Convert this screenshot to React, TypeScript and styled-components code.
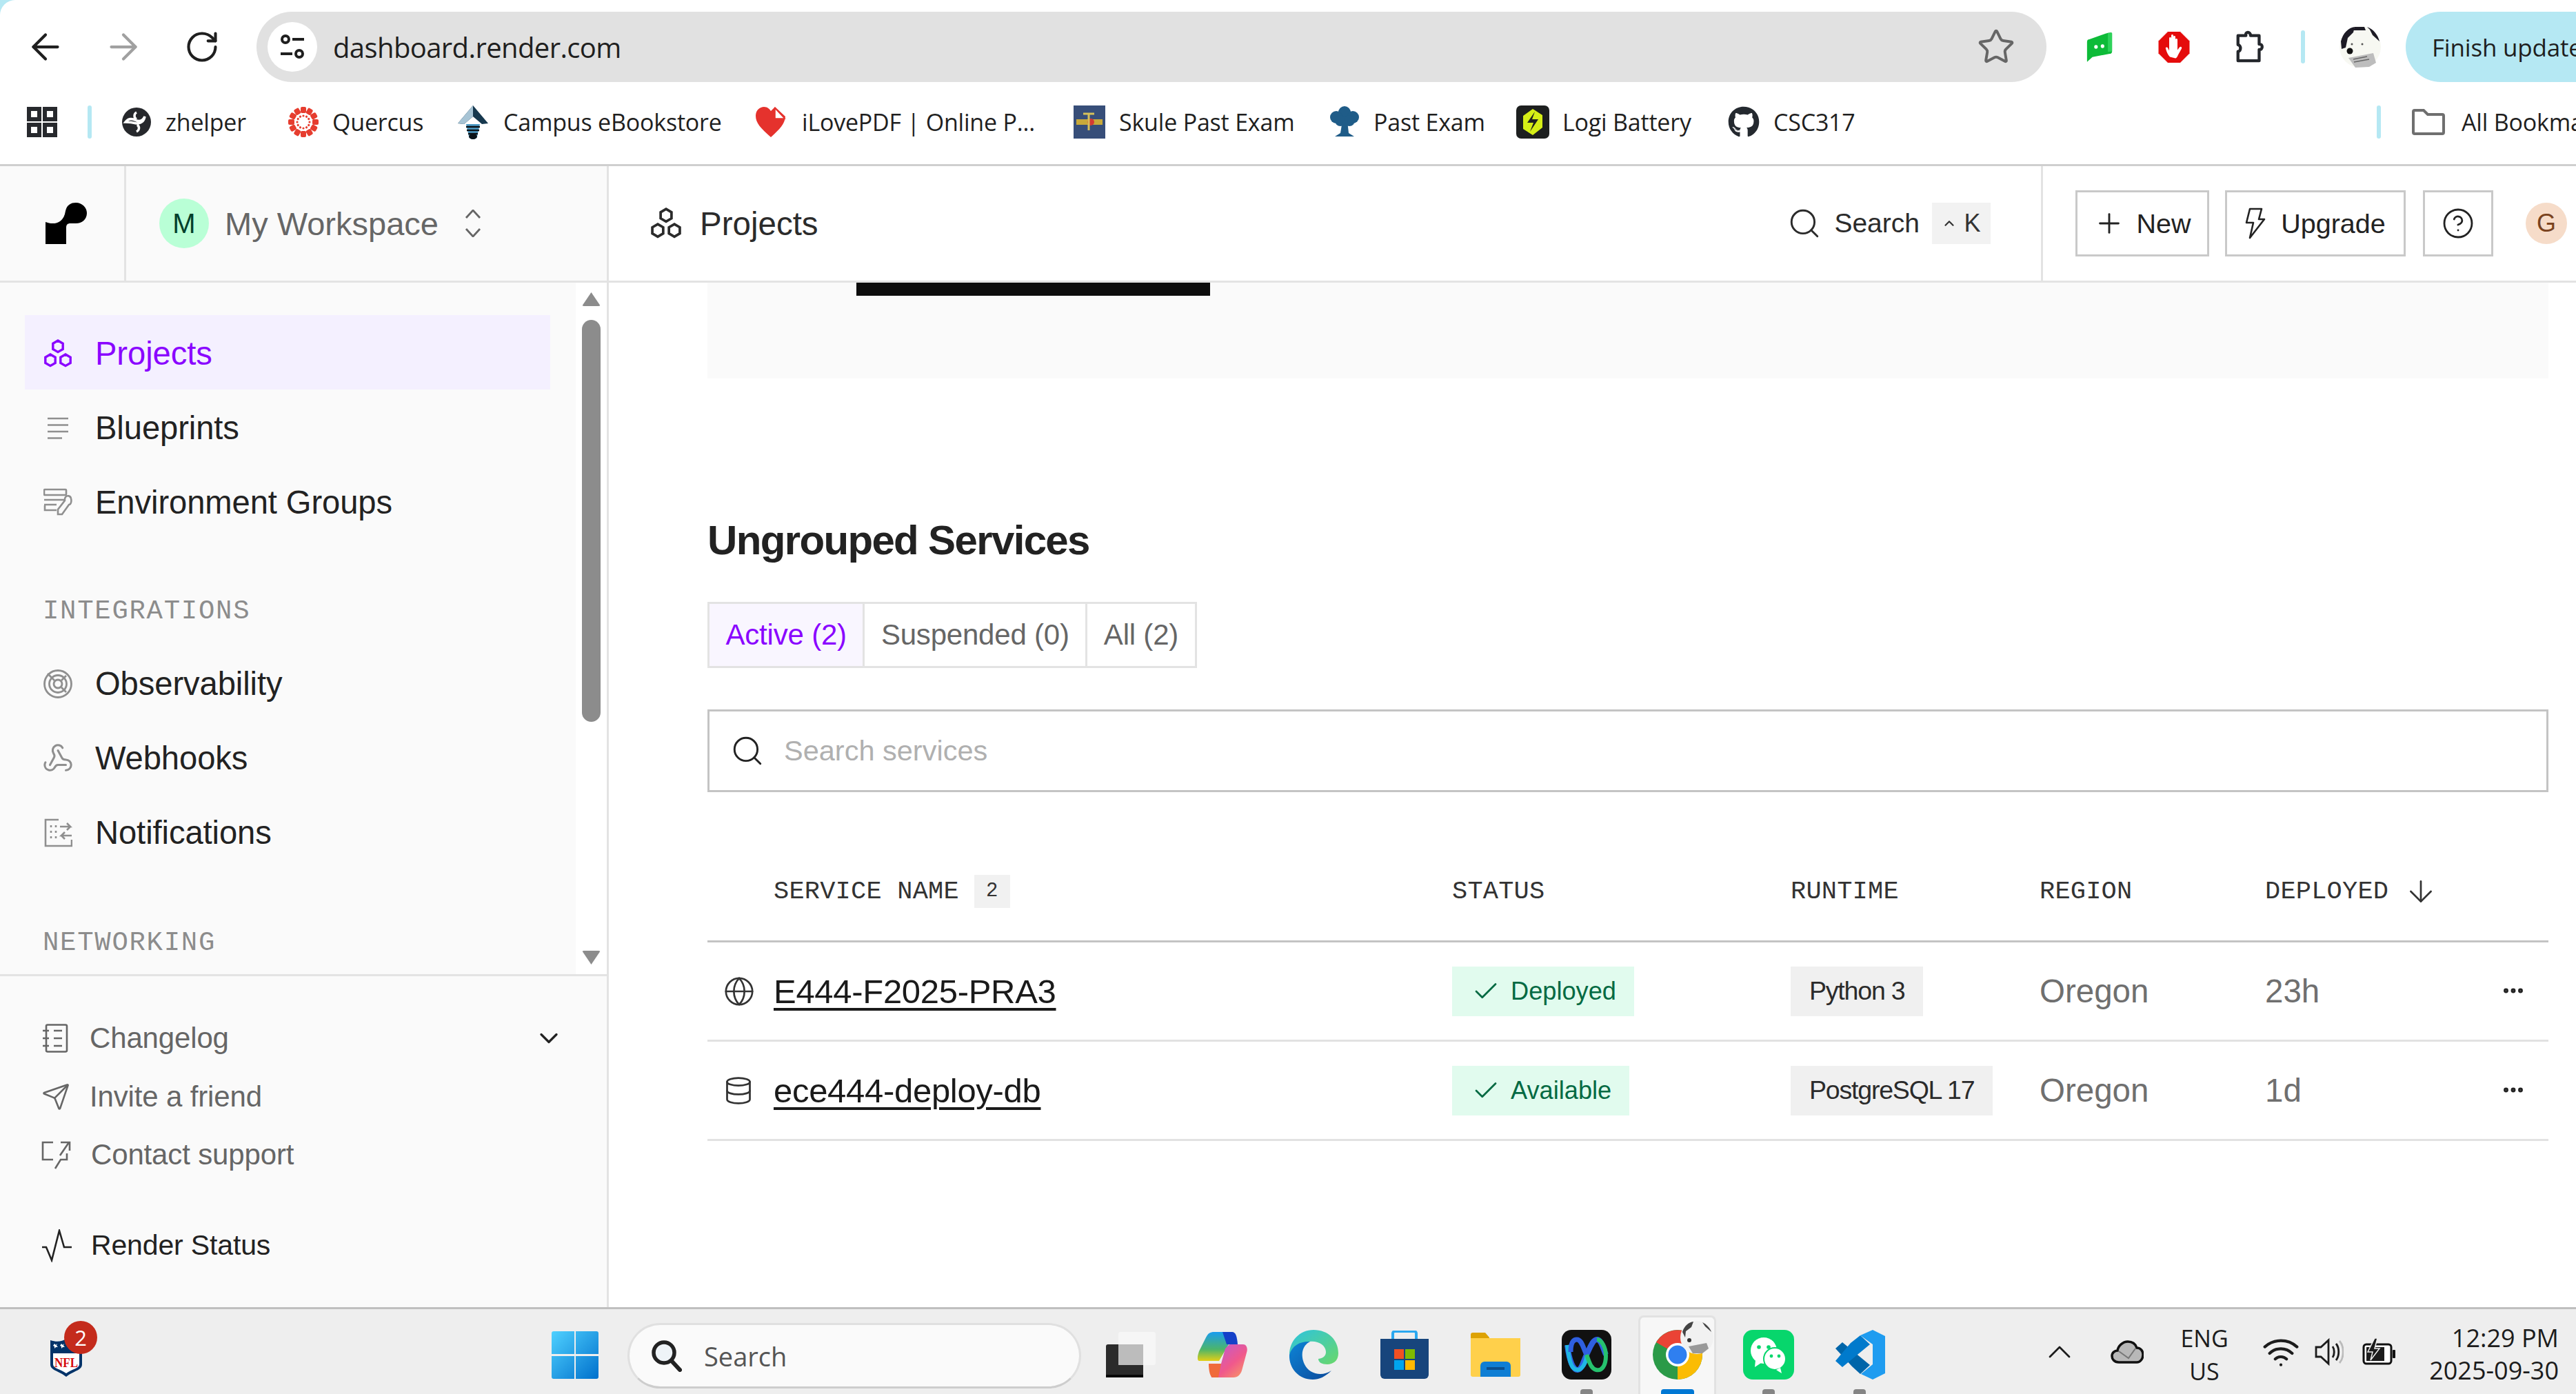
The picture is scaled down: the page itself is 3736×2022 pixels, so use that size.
import React from "react";
import styled, { createGlobalStyle } from "styled-components";
import {
  ArrowDown, ArrowLeft, ArrowRight, Check, ChevronDown, ChevronUp, CircleHelp, Database,
  Ellipsis, Globe, Plus, RotateCw, Search, Send, Star, Webhook, Wifi,
} from "lucide-react";
import { FaGithub } from "react-icons/fa";

const Global = createGlobalStyle`
  html, body { margin: 0; padding: 0; width: 3736px; height: 2022px; overflow: hidden; background: #fff; }
  * { box-sizing: border-box; }
  svg { display: block; flex: none; }
`;

const UI = `"Liberation Sans", Arial, sans-serif`;
const MONO = `"Liberation Mono", "DejaVu Sans Mono", monospace`;
const WIN = `"Open Sans", "Noto Sans", sans-serif`;

const Page = styled.div`
  width: 3736px; height: 2022px; display: flex; flex-direction: column; background: #b5e8f3;
`;
const Toolbar = styled.div`
  height: 120px; flex: none; display: flex; align-items: center; background: #fff;
  border-top-left-radius: 22px; padding-top: 16px; padding-bottom: 0;
  font-family: ${WIN}; color: #1f1f1f;
`;
const NavButton = styled.div<{ $w: number; $c?: string }>`
  width: ${(p) => p.$w}px; flex: none; display: flex; justify-content: center; color: ${(p) => p.$c ?? "#1f1f1f"};
`;
const Omnibox = styled.div`
  width: 2596px; height: 102px; flex: none; background: #e1e1e1; border-radius: 51px;
  display: flex; align-items: center; padding: 0 45px 0 16px; position: relative;
`;
const SiteChip = styled.div`
  width: 72px; height: 72px; border-radius: 50%; background: #fff; display: flex; align-items: center; justify-content: center;
`;
const UrlText = styled.div`
  margin-left: 23px; font-size: 40px; letter-spacing: -0.6px; flex: 1; color: #1f1f1f;
`;
const ExtSlot = styled.div<{ $w: number; $ml: number }>`
  width: ${(p) => p.$w}px; margin-left: ${(p) => p.$ml}px; flex: none; display: flex; justify-content: center; align-items: center;
`;
const BlueRule = styled.div<{ $h: number; $ml?: number }>`
  width: 6px; height: ${(p) => p.$h}px; background: #b5e8f3; border-radius: 3px; flex: none; margin-left: ${(p) => p.$ml ?? 0}px;
`;
const UpdatePill = styled.div`
  margin-left: 36px; flex: 1; height: 102px; background: #b5e8f3; border-radius: 51px 0 0 51px;
  display: flex; align-items: center; padding-left: 38px; font-size: 35px; letter-spacing: -0.2px; white-space: nowrap; overflow: hidden;
`;
const BookmarkBar = styled.div`
  height: 121px; flex: none; display: flex; align-items: center; background: #fff; border-bottom: 3px solid #cfcfcf;
  font-family: ${WIN}; font-size: 34px; letter-spacing: -0.2px; color: #1f1f1f; overflow: hidden; padding-left: 39px; padding-bottom: 4px;
`;
const Bookmark = styled.div<{ $w: number; $gap?: number }>`
  width: ${(p) => p.$w}px; flex: none; display: flex; align-items: center; gap: ${(p) => p.$gap ?? 22}px; white-space: nowrap;
`;
const AppArea = styled.div`
  flex: 1; min-height: 0; display: flex; background: #fff;
`;
const Sidebar = styled.aside`
  width: 883px; flex: none; display: flex; flex-direction: column; border-right: 3px solid #e3e3e3; font-family: ${UI};
`;
const SideHead = styled.div`
  height: 169px; flex: none; display: flex; align-items: stretch; background: #fafafa; border-bottom: 3px solid #e3e3e3;
`;
const LogoCell = styled.div`
  width: 183px; display: flex; align-items: center; padding-left: 66px; border-right: 3px solid #e3e3e3;
`;
const Workspace = styled.div`
  flex: 1; display: flex; align-items: center; padding-left: 48px; color: #666; font-size: 47px;
`;
const WsAvatar = styled.div`
  width: 72px; height: 72px; border-radius: 50%; background: #b9ffd6; color: #013f2b; display: flex; align-items: center;
  justify-content: center; font-size: 40px; margin-right: 23px;
`;
const WsChevrons = styled.div`
  margin-left: 38px; color: #666;
`;
const SideBody = styled.div`
  height: 1006px; flex: none; display: flex; border-bottom: 3px solid #e3e3e3; background: #fff;
`;
const NavScroll = styled.nav`
  width: 835px; flex: none; background: #fafafa; padding: 47px 0 0 36px; overflow: hidden;
`;
const NavItem = styled.div<{ $active?: boolean }>`
  width: 762px; height: 108px; flex: none; display: flex; align-items: center; padding: 3px 0 0 27px; gap: 33px; font-size: 47.2px; letter-spacing: -0.1px;
  background: ${(p) => (p.$active ? "#f4f0ff" : "transparent")}; color: ${(p) => (p.$active ? "#8a05ff" : "#222")};
`;
const NavIcon = styled.span<{ $active?: boolean }>`
  width: 42px; display: flex; justify-content: center; color: ${(p) => (p.$active ? "#8a05ff" : "#8f8f8f")};
`;
const SectionLabel = styled.div<{ $mt: number }>`
  margin-top: ${(p) => p.$mt}px; height: 108px; display: flex; align-items: center; padding: 10px 0 0 26px; font-family: ${MONO};
  font-size: 39px; letter-spacing: 1.7px; color: #8c8c8c;
`;
const Scrollbar = styled.div`
  flex: 1; display: flex; flex-direction: column; align-items: center; padding: 14px 0; background: #fff; gap: 20px;
`;
const ScrollArrow = styled.div<{ $down?: boolean }>`
  width: 27px; height: 20px; background: #8c8c8c; border-radius: 3px;
  clip-path: ${(p) => (p.$down ? "polygon(0 0,100% 0,50% 100%)" : "polygon(50% 0,100% 100%,0 100%)")};
`;
const ScrollThumb = styled.div`
  width: 27px; height: 583px; background: #8c8c8c; border-radius: 14px; margin-bottom: auto;
`;
const SideFoot = styled.div`
  flex: 1; background: #fafafa; padding: 48px 62px 0 60px; display: flex; flex-direction: column;
`;
const FootRow = styled.div<{ $dark?: boolean; $mt?: number }>`
  height: 84.5px; display: flex; align-items: center; gap: 28px; font-size: ${(p) => (p.$dark ? 41 : 42)}px; letter-spacing: -0.15px; color: ${(p) => (p.$dark ? "#222" : "#666")};
  margin-top: ${(p) => p.$mt ?? 0}px;
`;
const FootEnd = styled.div`
  margin-left: auto; color: #222;
`;
const Main = styled.main`
  flex: 1; min-width: 0; display: flex; flex-direction: column; font-family: ${UI};
`;
const MainHead = styled.header`
  height: 169px; flex: none; display: flex; align-items: stretch; border-bottom: 3px solid #e3e3e3; background: #fff;
`;
const Crumb = styled.div`
  flex: 1; display: flex; align-items: center; padding-left: 60px; gap: 26px; font-size: 47.5px; color: #2b2b2b;
`;
const HeadSearch = styled.div`
  display: flex; align-items: center; gap: 18px; padding-right: 73px; font-size: 39px; color: #2b2b2b;
`;
const Kbd = styled.div`
  width: 85px; height: 60px; background: #f2f2f2; display: flex; align-items: center; justify-content: center; gap: 10px;
  font-size: 36px; color: #333;
`;
const HeadActions = styled.div`
  width: 776px; flex: none; display: flex; align-items: center; border-left: 3px solid #e3e3e3; padding-left: 47px;
`;
const HeadButton = styled.div<{ $w: number; $ml?: number; $gap?: number }>`
  width: ${(p) => p.$w}px; height: 96px; border: 3px solid #c9c9c9; margin-left: ${(p) => p.$ml ?? 0}px; display: flex;
  align-items: center; justify-content: center; gap: ${(p) => p.$gap ?? 16}px; font-size: 39.5px; color: #222;
`;
const UserDot = styled.div`
  width: 60px; height: 60px; margin-left: 47px; border-radius: 50%; background: #f6dcc9; color: #7a4320; display: flex;
  align-items: center; justify-content: center; font-size: 36px;
`;
const Content = styled.div`
  flex: 1; min-height: 0; padding: 0 40px 0 143px; overflow: hidden;
`;
const Banner = styled.div`
  height: 139px; background: #fafafa; padding-left: 216px;
`;
const BannerBar = styled.div`
  width: 513px; height: 19px; background: #0d0d0d;
`;
const Title = styled.h2`
  margin: 199px 0 0; font-size: 60px; line-height: 72px; font-weight: 700; color: #222; letter-spacing: -1.65px;
`;
const Tabs = styled.div`
  margin-top: 53px; display: inline-flex; height: 96px; border: 3px solid #e3e3e3; vertical-align: top;
`;
const Tab = styled.div<{ $active?: boolean }>`
  padding: 0 23.5px; display: flex; align-items: center; font-size: 42px; letter-spacing: -0.2px; border-left: ${(p) => (p.$active ? "0" : "3px solid #e3e3e3")};
  color: ${(p) => (p.$active ? "#8a05ff" : "#666")}; background: ${(p) => (p.$active ? "#f9f6ff" : "#fff")};
`;
const SearchBox = styled.div`
  margin-top: 60px; height: 120px; border: 3px solid #c4c4c4; display: flex; align-items: center; padding-left: 30px; gap: 28px;
  font-size: 41.5px; color: #b0b0b0;
`;
const TableRow = styled.div<{ $head?: boolean; $h: number }>`
  display: grid; grid-template-columns: 96px 984px 491px 361px 327px 314px 92px; align-items: center; height: ${(p) => p.$h}px;
  border-bottom: 3px solid ${(p) => (p.$head ? "#c4c4c4" : "#e2e2e2")};
`;
const TableHead = styled.div`
  margin-top: 72px;
`;
const HeadCell = styled.div`
  display: flex; align-items: center; gap: 20px; font-family: ${MONO}; font-size: 37px; letter-spacing: 0.2px; color: #333;
`;
const CountTag = styled.span`
  width: 52px; height: 48px; background: #f1f1f1; display: flex; align-items: center; justify-content: center; font-size: 29px; margin-left: 2px;
`;
const SortArrow = styled.span`
  margin-left: 2px;
`;
const LeadIcon = styled.div`
  padding-left: 23px; color: #333;
`;
const ServiceLink = styled.a`
  font-size: 49px; letter-spacing: -0.3px; color: #1a1a1a; text-decoration: underline; text-underline-offset: 7px; text-decoration-thickness: 4px;
`;
const StatusTag = styled.div`
  display: inline-flex; align-items: center; justify-self: start; gap: 15px; height: 72px; padding: 0 26px 0 28px; background: #e1fbee;
  color: #046a43; font-size: 36.2px;
`;
const RuntimeTag = styled.div`
  justify-self: start; height: 72px; padding: 0 27px; display: flex; align-items: center; background: #f0f0f0; color: #2b2b2b;
  font-size: 37.5px; letter-spacing: -1.2px;
`;
const Muted = styled.div`
  font-size: 47.5px; color: #6f6f6f;
`;
const RowMenu = styled.div`
  display: flex; justify-content: center; color: #222; padding-bottom: 2px;
`;
const Taskbar = styled.footer`
  height: 126px; flex: none; display: flex; align-items: stretch; background: #eeeeee; border-top: 3px solid #bfbfbf;
  font-family: ${WIN}; color: #1c1c1c; position: relative;
`;
const Widget = styled.div`
  width: 768px; flex: none; padding: 43px 0 0 73px;
`;
const WidgetIcon = styled.div`
  position: relative; width: 46px; height: 55px;
`;
const WidgetBadge = styled.div`
  position: absolute; left: 20px; top: -26px; width: 48px; height: 48px; border-radius: 50%; background: #c42b1c; color: #fff;
  display: flex; align-items: center; justify-content: center; font-size: 31px;
`;
const TaskSlot = styled.div<{ $w?: number }>`
  width: ${(p) => p.$w ?? 132}px; flex: none; position: relative; display: flex; align-items: center; justify-content: center;
`;
const ActiveFrame = styled.div`
  position: absolute; left: 9px; right: 10px; top: 9px; bottom: 0; background: #f7f7f7; border: 3px solid #e2e2e2; border-bottom: 0;
  border-radius: 8px 8px 0 0;
`;
const SlotInner = styled.div`
  position: relative; padding-top: 9px;
`;
const Indicator = styled.div<{ $active?: boolean }>`
  position: absolute; bottom: 0; left: 50%; transform: translateX(-50%); height: 7px; width: ${(p) => (p.$active ? 48 : 18)}px;
  background: ${(p) => (p.$active ? "#0078d4" : "#858585")}; border-radius: 4px 4px 0 0;
`;
const TaskSearch = styled.div`
  width: 658px; height: 95px; margin: 20px 7px 0 10px; flex: none; border: 3px solid #e0e0e0; border-bottom-color: #cdcdcd; border-radius: 48px;
  background: #fafafa; display: flex; align-items: center; padding-left: 32px; gap: 32px; font-size: 38px; color: #555;
`;
const Tray = styled.div`
  margin-left: auto; display: flex; align-items: center; padding-right: 25px;
`;
const TrayIcon = styled.div<{ $ml: number }>`
  margin-left: ${(p) => p.$ml}px; display: flex; align-items: center;
`;
const Lang = styled.div`
  width: 74px; margin-left: 51px; padding-top: 8px; text-align: center; font-size: 34px; line-height: 48px; white-space: nowrap; display: flex; flex-direction: column; align-items: center;
`;
const Clock = styled.div`
  margin-left: 32px; width: 205px; padding-top: 6px; text-align: right; font-size: 36px; line-height: 47px; white-space: nowrap;
`;
const ProfileBadge = styled.div`
  position: absolute; right: 14px; top: 17px; z-index: 2;
`;

/* ---- drawings ---- */
const HexIcon = ({ s = 42 }: { s?: number }) => (
  <svg width={s} height={s} viewBox="0 0 42 42" fill="none" stroke="currentColor" strokeWidth="3.4">
    <path d="M21 2l7.2 4.2v8.2L21 18.6l-7.2-4.2V6.2zM10 22l7.2 4.2v8.2L10 38.6l-7.2-4.2v-8.2zM32 22l7.2 4.2v8.2L32 38.6l-7.2-4.2v-8.2z" />
  </svg>
);
const BlueprintIcon = () => (
  <svg width="42" height="42" viewBox="0 0 42 42" fill="none" stroke="currentColor" strokeWidth="2.6">
    <path d="M6 7h30M6 16.500h30M6 26h30M6 35.500h21" />
  </svg>
);
const EnvIcon = () => (
  <svg width="42" height="42" viewBox="0 0 42 42" fill="none" stroke="currentColor" strokeWidth="2.6">
    <rect x="1" y="2" width="32" height="8" rx="1" />
    <path d="M1 17h30M1 24h18M19 32H2v-7M40 15a4.500 4.500 0 0 0-8-2c-1.500 2-1 4-1 5L21 31v7h6l10-14c3 0 4-5 3-9z" />
  </svg>
);
const ObsIcon = () => (
  <svg width="42" height="42" viewBox="0 0 42 42" fill="none" stroke="currentColor" strokeWidth="2.8">
    <circle cx="21" cy="21" r="19.500" />
    <circle cx="21" cy="21" r="12.500" />
    <circle cx="21" cy="21" r="6" />
    <path d="M6 6l10 10M26 26l7 7M33 9l-7 7" />
  </svg>
);
const NotifIcon = () => (
  <svg width="42" height="42" viewBox="0 0 42 42" fill="none" stroke="currentColor" strokeWidth="2.6">
    <path d="M22 2H3v38h38v-9" />
    <path d="M11 10v3M11 18v3M11 26v3M18 10v3M18 18v3M18 26v3" />
    <path d="M24 12h15l-5-5M39 12l-5 5M41 25H26l5-5M26 25l5 5" />
  </svg>
);
const ChangelogIcon = () => (
  <svg width="42" height="42" viewBox="0 0 42 42" fill="none" stroke="currentColor" strokeWidth="2.6">
    <rect x="7" y="1.500" width="30" height="39" rx="2" />
    <path d="M2 10h9M2 21h9M2 32h9M18 10h12M18 21h12M18 32h12" />
  </svg>
);
const ContactIcon = () => (
  <svg width="44" height="44" viewBox="0 0 44 44" fill="none" stroke="currentColor" strokeWidth="2.6">
    <path d="M17 4H2v25h15M27 23l13-19M28 4h13v12M37 20v9h-9l-8 13" />
  </svg>
);
const StatusIcon = () => (
  <svg width="44" height="48" viewBox="0 0 44 48" fill="none" stroke="currentColor" strokeWidth="2.6">
    <path d="M1 26h6l8 19 11-43 7 24h11" />
  </svg>
);
const RenderLogo = () => (
  <svg width="60" height="60" viewBox="0 0 60 60" fill="#000">
    <path d="M0 28C10 32 26 32 29 12 31 3 37 0 44 0 53 0 60 7 60 15 60 24 53 30 44 30H36C32 30 30 32 30 36V60H0Z" />
  </svg>
);
const WsSwitch = () => (
  <svg width="24" height="40" viewBox="0 0 24 40" fill="none" stroke="currentColor" strokeWidth="2.800">
    <path d="M2 12L12 1l10 11M2 28l10 11 10-11" />
  </svg>
);
const BoltIcon = () => (
  <svg width="30" height="46" viewBox="0 0 30 46" fill="none" stroke="currentColor" strokeWidth="2.600" strokeLinejoin="round">
    <path d="M7 2h17l-4 15h8L7 44l5-22H2z" />
  </svg>
);
const SiteInfo = () => (
  <svg width="40" height="40" viewBox="0 0 40 40" fill="none" stroke="#1f1f1f" strokeWidth="4">
    <circle cx="10" cy="9" r="5" />
    <path d="M20 9h17M3 30h17" />
    <circle cx="30" cy="30" r="5" />
  </svg>
);
const MsgExt = () => (
  <svg width="38" height="44" viewBox="0 0 44 48" preserveAspectRatio="none">
    <path d="M36 2c2 0 7-2 7 1v28c0 3-2 4-4 4L10 40 2 47c-1 1-1 1-1-2V16c0-3 2-4 4-4l27-9z" fill="#0dbb38" />
    <path d="M36 2l7 0v29l-7 1z" fill="#2ed25a" />
    <circle cx="16" cy="24" r="3" fill="#fff" />
    <circle cx="27" cy="23" r="3" fill="#fff" />
  </svg>
);
const AdblockExt = () => (
  <svg width="48" height="49" viewBox="0 0 48 48">
    <path d="M15 1h18l14 14v18L33 47H15L1 33V15z" fill="#e50c0c" stroke="#fff" />
    <path d="M18 38c-3-3-5-8-6-12-1-2 2-3 3-1l2 4V11c0-2 3-2 3 0v9-13c0-2 3-2 3 0v13-11c0-2 3-2 3 0v12-8c0-2 3-2 3 0v15l3-4c2-2 4 0 3 2l-5 9c-1 3-3 5-4 5z" fill="#fff" />
  </svg>
);
const PuzzleExt = () => (
  <svg width="48" height="48" viewBox="0 0 46 50" fill="#fff" stroke="#24272c" strokeWidth="4.500" strokeLinejoin="round">
    <path d="M4 8h12c-2-6 7-7 7 0h13v13c6-1 6 9 0 8v17H4V32c5 0 5-10 0-10z" />
  </svg>
);
const Avatar = () => (
  <svg width="60" height="60" viewBox="0 0 60 60">
    <circle cx="30" cy="30" r="30" fill="#f7f8f2" />
    <path d="M2 22C5 10 13 2 22 1l-2 8-8 8-3 14-6 2zM40 1c9 3 16 12 18 21l-10-9-4-8z" fill="#1d1b25" />
    <path d="M22 1h14l2 5H20z" fill="#1d1b25" />
    <circle cx="15" cy="36" r="4.500" fill="#111" />
    <circle cx="18" cy="26" r="1.500" fill="#555" />
    <circle cx="33" cy="26" r="1.500" fill="#555" />
    <path d="M13 46l36-7 4 14-10 6-20 1z" fill="#bdbdbd" />
    <path d="M20 48l20-4M21 52l22-4" stroke="#666" strokeWidth="1.500" />
  </svg>
);
const ZhelperIcon = () => (
  <svg width="44" height="46" viewBox="0 0 44 44">
    <circle cx="22" cy="22" r="21" fill="#26282c" />
    <path d="M6 22c6-8 14-3 16-2 6 2 10-2 12-6-1 6-5 10-12 10-8-2-12-2-16-2zM22 8c-4 2-4 8 0 10M22 36c4-2 5-7 1-10" fill="none" stroke="#fff" strokeWidth="3.5" />
  </svg>
);
const QuercusIcon = () => (
  <svg width="44" height="48" viewBox="0 0 44 44" fill="#e63d2f">
    {[0, 30, 60, 90, 120, 150, 180, 210, 240, 270, 300, 330].map((a) => (
      <g key={a} transform={`rotate(${a} 22 22)`}>
        <rect x="18" y="0" width="8" height="9" rx="2" />
        <circle cx="22" cy="13" r="1.600" />
      </g>
    ))}
  </svg>
);
const CampusIcon = () => (
  <svg width="46" height="50" viewBox="0 0 46 50">
    <path d="M23 1l22 26-9 1-13-11L10 28 1 27z" fill="#16384e" />
    <path d="M23 1L1 27l9 1 13-11z" fill="#a7c4d5" />
    <path d="M13 28h20l-4 18a6 4 0 0 1-12 0z" fill="#4e9bc6" />
    <path d="M13 32h20M14 37h18M16 42h14" stroke="#0b1217" strokeWidth="2.500" />
    <ellipse cx="23" cy="46" rx="6" ry="4" fill="#0b1217" />
  </svg>
);
const HeartIcon = () => (
  <svg width="46" height="46" viewBox="0 0 46 46">
    <path d="M23 45C8 32 1 24 1 14 1 6 7 1 13 1c5 0 8 3 10 6l6-6 15 14c-1 11-8 18-21 30z" fill="#e5322d" />
    <path d="M29 3v15h14z" fill="#fff" stroke="#e5322d" strokeWidth="1.500" />
  </svg>
);
const SkuleIcon = () => (
  <svg width="46" height="48" viewBox="0 0 46 48">
    <rect width="46" height="48" fill="#374e79" />
    <rect x="4" y="20" width="38" height="8" fill="#c8a93a" />
    <circle cx="25" cy="24" r="5" fill="#d43b33" />
    <path d="M14 12h16M22 12v24" stroke="#d6c05a" strokeWidth="3" />
  </svg>
);
const TreeIcon = () => (
  <svg width="46" height="48" viewBox="0 0 46 48" fill="#1f5c88">
    <circle cx="23" cy="10" r="9" />
    <circle cx="11" cy="17" r="9" />
    <circle cx="35" cy="17" r="9" />
    <circle cx="17" cy="22" r="8" />
    <circle cx="30" cy="22" r="8" />
    <path d="M20 22h7l2 18 8 5H9l8-5z" />
  </svg>
);
const LogiIcon = () => (
  <svg width="48" height="48" viewBox="0 0 48 48">
    <rect width="48" height="48" rx="7" fill="#1d1f1f" />
    <path d="M24 5l14 9v18L24 43 10 34V15z" fill="#d5ee16" />
    <path d="M27 9L16 25h9l-5 13 12-18h-9z" fill="#1d1f1f" />
  </svg>
);
const AppsIcon = () => (
  <svg width="44" height="44" viewBox="0 0 44 44" fill="none" stroke="#27292d" strokeWidth="6">
    <rect x="3" y="3" width="15" height="15" />
    <rect x="26" y="3" width="15" height="15" />
    <rect x="3" y="26" width="15" height="15" />
    <rect x="26" y="26" width="15" height="15" />
  </svg>
);
const FolderIcon = () => (
  <svg width="48" height="38" viewBox="0 0 48 38" fill="none" stroke="#6f6f6f" strokeWidth="4">
    <path d="M2 4a2 2 0 0 1 2-2h13l6 6h21a2 2 0 0 1 2 2v24a2 2 0 0 1-2 2H4a2 2 0 0 1-2-2z" />
  </svg>
);
const NflIcon = () => (
  <svg width="46" height="55" viewBox="0 0 46 55">
    <path d="M0 2c9 3 17 2 23-2 6 4 14 5 23 2v35c0 9-12 9-23 18C12 46 0 46 0 37z" fill="#013369" />
    <path d="M4 21h38v16c0 6-11 7-19 13C15 44 4 43 4 37z" fill="#fff" />
    <text x="23" y="41" textAnchor="middle" fontFamily="Liberation Serif, serif" fontWeight="700" fontSize="18" fill="#d50a0a" textLength="34" lengthAdjust="spacingAndGlyphs">NFL</text>
    <path d="M6 7l2 2 2-2-1 3 2 2H8l-2 2 0-3-2-1zM16 7l2 2 2-2-1 3 2 2h-3l-2 2 0-3-2-1z" fill="#fff" />
  </svg>
);
const WindowsLogo = () => (
  <svg width="68" height="69" viewBox="0 0 68 69">
    <defs>
      <linearGradient id="wg" x1="0" y1="0" x2="1" y2="1">
        <stop offset="0" stopColor="#4fd1ff" />
        <stop offset="1" stopColor="#0070cc" />
      </linearGradient>
    </defs>
    <path d="M3 0h30v33H0V3a3 3 0 0 1 3-3zM35 0h30a3 3 0 0 1 3 3v30H35zM0 36h33v33H3a3 3 0 0 1-3-3zM35 36h33v30a3 3 0 0 1-3 3H35z" fill="url(#wg)" />
  </svg>
);
const WinSearchIcon = () => (
  <svg width="44" height="46" viewBox="0 0 44 46" fill="none" stroke="#222" strokeWidth="5.500">
    <circle cx="18" cy="18" r="15" fill="#eef3f7" />
    <path d="M29 30l12 13" strokeLinecap="round" strokeWidth="6" />
  </svg>
);
const TaskViewIcon = () => (
  <svg width="74" height="66" viewBox="0 0 74 66">
    <rect x="0" y="18" width="54" height="48" rx="3" fill="#2b2b2b" />
    <rect x="0" y="62" width="54" height="4" fill="#080808" />
    <rect x="18" y="0" width="54" height="48" rx="3" fill="#f6f6f6" />
    <rect x="18" y="18" width="36" height="30" fill="#bcbcbc" />
  </svg>
);
const CopilotIcon = () => (
  <svg width="72" height="66" viewBox="0 0 72 66">
    <defs>
      <linearGradient id="cp1" x1="0" y1="0" x2="0" y2="1">
        <stop offset="0" stopColor="#1a9cf0" />
        <stop offset=".6" stopColor="#4cb56a" />
        <stop offset="1" stopColor="#e3cf16" />
      </linearGradient>
      <linearGradient id="cp2" x1="0" y1="0" x2="1" y2="1">
        <stop offset="0" stopColor="#b25ce0" />
        <stop offset=".6" stopColor="#f0588c" />
        <stop offset="1" stopColor="#f9a060" />
      </linearGradient>
    </defs>
    <path d="M24 0h24l-3 18-14 24H3C-2 42 0 34 2 28L12 8c3-6 6-8 12-8z" fill="url(#cp1)" />
    <path d="M36 0h14c5 0 7 6 8 18H42z" fill="#1440c8" />
    <path d="M46 18h20c5 0 7 6 5 12l-7 26c-2 6-6 10-12 10H20l-4-20h18l6-22z" fill="url(#cp2)" />
    <path d="M16 46h18l-4 20h-8c-4 0-6-10-6-20z" fill="#f06a3a" />
  </svg>
);
const EdgeIcon = () => (
  <svg width="72" height="72" viewBox="0 0 72 72">
    <defs>
      <linearGradient id="eg" x1="0" y1="0" x2="1" y2="1">
        <stop offset="0" stopColor="#2cc3e0" />
        <stop offset="1" stopColor="#6ad86a" />
      </linearGradient>
      <linearGradient id="eb" x1="0" y1="0" x2="1" y2="1">
        <stop offset="0" stopColor="#0d84d6" />
        <stop offset="1" stopColor="#0c4a9b" />
      </linearGradient>
    </defs>
    <path d="M36 0C58 0 72 15 72 34c0 11-8 16-16 16-8 0-13-3-13-8 8-1 11-5 11-10 0-10-12-17-24-15C14 19 5 27 1 36 1 16 16 0 36 0z" fill="url(#eg)" />
    <path d="M1 36C5 22 18 16 31 17c-12 6-14 20-8 33 6 13 24 19 39 9-9 9-18 13-27 13C15 72 0 56 1 36z" fill="url(#eb)" />
  </svg>
);
const StoreIcon = () => (
  <svg width="70" height="70" viewBox="0 0 70 70">
    <path d="M18 12V4a3 3 0 0 1 3-3h28a3 3 0 0 1 3 3v8" fill="none" stroke="#2aa8f0" strokeWidth="4" />
    <path d="M0 12h70v52a6 6 0 0 1-6 6H6a6 6 0 0 1-6-6z" fill="#17457c" />
    <rect x="20" y="27" width="14" height="14" fill="#f25022" />
    <rect x="36" y="27" width="14" height="14" fill="#7fba00" />
    <rect x="20" y="43" width="14" height="14" fill="#00a4ef" />
    <rect x="36" y="43" width="14" height="14" fill="#ffb900" />
  </svg>
);
const ExplorerIcon = () => (
  <svg width="72" height="64" viewBox="0 0 72 64">
    <path d="M0 3a3 3 0 0 1 3-3h18l6 7v12H0z" fill="#dda204" />
    <path d="M0 8h72v53a3 3 0 0 1-3 3H3a3 3 0 0 1-3-3z" fill="#ffd04b" />
    <path d="M14 64V48a6 6 0 0 1 6-6h32a6 6 0 0 1 6 6v16z" fill="#0f7ed4" />
    <rect x="23" y="50" width="26" height="4" fill="#0a4f8e" />
  </svg>
);
const WebexIcon = () => (
  <svg width="72" height="72" viewBox="0 0 72 72" fill="none">
    <rect width="72" height="72" rx="14" fill="#111" />
    <path d="M8 22c3 24 9 36 15 36s8-12 13-22 9-22 15-22 8 10 13 22" stroke="#2f5fe0" strokeWidth="8" />
    <path d="M8 22c3 24 6 36 15 36 6 0 13-10 13-22" stroke="#1fb7e3" strokeWidth="6" />
    <path d="M36 36c-5-10-7-22-14-22s-9 8-9 18" stroke="#2f5fe0" strokeWidth="7" />
    <path d="M51 14c6 0 13 10 13 24s-6 22-14 20-10-12-14-22" stroke="#26c26e" strokeWidth="6" />
  </svg>
);
const ChromeIcon = () => (
  <svg width="72" height="72" viewBox="0 0 72 72">
    <circle cx="36" cy="36" r="36" fill="#2b9a48" />
    <path d="M36 36L5 18A36 36 0 0 1 67 18z" fill="#ea4335" />
    <path d="M36 36h36a36 36 0 0 1-36 36z" fill="#fbbc04" />
    <path d="M36 36l31-18a36 36 0 0 1 5 18z" fill="#fbbc04" />
    <circle cx="36" cy="36" r="17" fill="#fff" />
    <circle cx="36" cy="36" r="13.500" fill="#2f7ff0" />
  </svg>
);
const SmallAvatar = () => (
  <svg width="48" height="48" viewBox="0 0 48 48">
    <circle cx="24" cy="24" r="24" fill="#f1f1f1" />
    <path d="M3 16C6 7 12 2 19 1l-3 8-8 6-1 9zM32 2c6 3 11 8 13 14l-9-8z" fill="#444" />
    <circle cx="13" cy="28" r="3" fill="#333" />
    <path d="M12 37l26-5 3 8-9 7H18z" fill="#999" />
  </svg>
);
const WeChatIcon = () => (
  <svg width="74" height="72" viewBox="0 0 74 72">
    <rect width="74" height="72" rx="14" fill="#07d66c" />
    <ellipse cx="30" cy="30" rx="19" ry="19" fill="#fff" />
    <path d="M18 44l-1 10 9-6z" fill="#fff" />
    <ellipse cx="46" cy="42" rx="16" ry="16" fill="#fff" stroke="#07d66c" strokeWidth="2" />
    <path d="M54 55l2 8-8-5z" fill="#fff" />
    <circle cx="23" cy="25" r="2.800" fill="#07d66c" />
    <circle cx="37" cy="25" r="2.800" fill="#07d66c" />
    <circle cx="41" cy="38" r="2.400" fill="#07d66c" />
    <circle cx="52" cy="38" r="2.400" fill="#07d66c" />
  </svg>
);
const VsCodeIcon = () => (
  <svg width="74" height="72" viewBox="0 0 74 72">
    <path d="M2 27l10-9 40 33-14 13-12-11z" fill="#0065a9" />
    <path d="M2 45l10 9L52 21 38 8 24 19z" fill="#007acc" />
    <path d="M56 0l18 9v54l-18 9-17-8 17-14V21L38 8z" fill="#1f9cf0" />
  </svg>
);
const CloudIcon = () => (
  <svg width="48" height="34" viewBox="0 0 48 34">
    <path d="M12 32C5 32 2 27 2 23c0-5 4-8 8-8 1-7 8-13 15-13 6 0 11 3 13 9 6 0 9 5 9 10 0 6-4 11-9 11z" fill="#b8b8b8" stroke="#111" strokeWidth="3.500" />
    <path d="M12 16l14 10 10-14" fill="none" stroke="#777" strokeWidth="2" />
  </svg>
);
const VolumeIcon = () => (
  <svg width="42" height="42" viewBox="0 0 42 42" fill="none" stroke="#1c1c1c" strokeWidth="2.800">
    <path d="M2 14h7L20 4v34L9 28H2z" />
    <path d="M26 13c3 4 3 12 0 16" />
    <path d="M31 9c5 6 5 18 0 24" />
    <path d="M36 5c7 8 7 24 0 32" stroke="#bbb" />
  </svg>
);
const BatteryIcon = () => (
  <svg width="48" height="40" viewBox="0 0 48 40">
    <rect x="2" y="9" width="40" height="28" rx="4" fill="#fff" stroke="#111" strokeWidth="3" />
    <rect x="6" y="13" width="26" height="20" fill="#1c1c1c" />
    <rect x="44" y="17" width="4" height="12" rx="1" fill="#111" />
    <path d="M18 0L8 20h7l-3 12 13-17h-7l4-15z" fill="#1c1c1c" stroke="#eee" strokeWidth="1.500" />
  </svg>
);

const navTop = [
  { label: "Projects", icon: <HexIcon />, active: true },
  { label: "Blueprints", icon: <BlueprintIcon /> },
  { label: "Environment Groups", icon: <EnvIcon /> },
];
const navIntegrations = [
  { label: "Observability", icon: <ObsIcon /> },
  { label: "Webhooks", icon: <Webhook size={46} strokeWidth={1.600} /> },
  { label: "Notifications", icon: <NotifIcon /> },
];
const services = [
  { name: "E444-F2025-PRA3", icon: <Globe size={46} strokeWidth={1.400} />, status: "Deployed", runtime: "Python 3", age: "23h" },
  { name: "ece444-deploy-db", icon: <Database size={44} strokeWidth={1.500} />, status: "Available", runtime: "PostgreSQL 17", age: "1d" },
];
const bookmarks = [
  { label: "zhelper", icon: <ZhelperIcon />, w: 242, gap: 20 },
  { label: "Quercus", icon: <QuercusIcon />, w: 245, gap: 20 },
  { label: "Campus eBookstore", icon: <CampusIcon />, w: 432, gap: 21 },
  { label: "iLovePDF | Online P...", icon: <HeartIcon />, w: 462, gap: 22 },
  { label: "Skule Past Exam", icon: <SkuleIcon />, w: 370, gap: 20 },
  { label: "Past Exam", icon: <TreeIcon />, w: 272, gap: 19 },
  { label: "Logi Battery", icon: <LogiIcon />, w: 307, gap: 19 },
];

export default function App() {
  return (
    <Page>
      <Global />
      <Toolbar>
        <NavButton $w={132}><ArrowLeft size={60} strokeWidth={1.700} /></NavButton>
        <NavButton $w={94} $c="#a0a0a0"><ArrowRight size={60} strokeWidth={1.700} /></NavButton>
        <NavButton $w={134}><RotateCw size={52} strokeWidth={1.900} /></NavButton>
        <NavButton $w={12} />
        <Omnibox>
          <SiteChip><SiteInfo /></SiteChip>
          <UrlText>dashboard.render.com</UrlText>
          <Star size={56} strokeWidth={1.700} color="#666" />
        </Omnibox>
        <ExtSlot $w={38} $ml={58}><MsgExt /></ExtSlot>
        <ExtSlot $w={48} $ml={65}><AdblockExt /></ExtSlot>
        <ExtSlot $w={48} $ml={63}><PuzzleExt /></ExtSlot>
        <BlueRule $h={48} $ml={49} />
        <ExtSlot $w={60} $ml={50}><Avatar /></ExtSlot>
        <UpdatePill>Finish update</UpdatePill>
      </Toolbar>
      <BookmarkBar>
        <Bookmark $w={88}><AppsIcon /></Bookmark>
        <Bookmark $w={49}><BlueRule $h={48} /></Bookmark>
        {bookmarks.map((b) => (
          <Bookmark key={b.label} $w={b.w} $gap={b.gap}>{b.icon}{b.label}</Bookmark>
        ))}
        <Bookmark $w={941} $gap={20}><FaGithub size={46} color="#24292f" />CSC317</Bookmark>
        <Bookmark $w={51}><BlueRule $h={48} /></Bookmark>
        <Bookmark $w={238} $gap={24}><FolderIcon />All Bookmarks</Bookmark>
      </BookmarkBar>
      <AppArea>
        <Sidebar>
          <SideHead>
            <LogoCell><RenderLogo /></LogoCell>
            <Workspace>
              <WsAvatar>M</WsAvatar>
              My Workspace
              <WsChevrons><WsSwitch /></WsChevrons>
            </Workspace>
          </SideHead>
          <SideBody>
            <NavScroll>
              {navTop.map((n) => (
                <NavItem key={n.label} $active={n.active}>
                  <NavIcon $active={n.active}>{n.icon}</NavIcon>
                  {n.label}
                </NavItem>
              ))}
              <SectionLabel $mt={47}>INTEGRATIONS</SectionLabel>
              {navIntegrations.map((n) => (
                <NavItem key={n.label}>
                  <NavIcon>{n.icon}</NavIcon>
                  {n.label}
                </NavItem>
              ))}
              <SectionLabel $mt={49}>NETWORKING</SectionLabel>
            </NavScroll>
            <Scrollbar>
              <ScrollArrow />
              <ScrollThumb />
              <ScrollArrow $down />
            </Scrollbar>
          </SideBody>
          <SideFoot>
            <FootRow><ChangelogIcon />Changelog<FootEnd><ChevronDown size={44} strokeWidth={1.800} /></FootEnd></FootRow>
            <FootRow><Send size={42} strokeWidth={1.500} />Invite a friend</FootRow>
            <FootRow><ContactIcon />Contact support</FootRow>
            <FootRow $dark $mt={47}><StatusIcon />Render Status</FootRow>
          </SideFoot>
        </Sidebar>
        <Main>
          <MainHead>
            <Crumb>
              <HexIcon s={46} />
              Projects
            </Crumb>
            <HeadSearch>
              <Search size={50} strokeWidth={1.400} />
              Search
              <Kbd><ChevronUp size={22} strokeWidth={2.400} />K</Kbd>
            </HeadSearch>
            <HeadActions>
              <HeadButton $w={194}><Plus size={46} strokeWidth={1.500} />New</HeadButton>
              <HeadButton $w={262} $ml={23} $gap={22}><BoltIcon />Upgrade</HeadButton>
              <HeadButton $w={102} $ml={25}><CircleHelp size={48} strokeWidth={1.400} /></HeadButton>
              <UserDot>G</UserDot>
            </HeadActions>
          </MainHead>
          <Content>
            <Banner><BannerBar /></Banner>
            <Title>Ungrouped Services</Title>
            <Tabs>
              <Tab $active>Active (2)</Tab>
              <Tab>Suspended (0)</Tab>
              <Tab>All (2)</Tab>
            </Tabs>
            <SearchBox>
              <Search size={50} strokeWidth={1.400} color="#222" />
              Search services
            </SearchBox>
            <TableHead>
              <TableRow $head $h={146}>
                <span />
                <HeadCell>SERVICE NAME<CountTag>2</CountTag></HeadCell>
                <HeadCell>STATUS</HeadCell>
                <HeadCell>RUNTIME</HeadCell>
                <HeadCell>REGION</HeadCell>
                <HeadCell>DEPLOYED<SortArrow><ArrowDown size={50} strokeWidth={1.300} /></SortArrow></HeadCell>
                <span />
              </TableRow>
            </TableHead>
            {services.map((s) => (
              <TableRow key={s.name} $h={144}>
                <LeadIcon>{s.icon}</LeadIcon>
                <div><ServiceLink>{s.name}</ServiceLink></div>
                <StatusTag><Check size={42} strokeWidth={1.600} />{s.status}</StatusTag>
                <RuntimeTag>{s.runtime}</RuntimeTag>
                <Muted>Oregon</Muted>
                <Muted>{s.age}</Muted>
                <RowMenu><Ellipsis size={36} strokeWidth={2.600} /></RowMenu>
              </TableRow>
            ))}
          </Content>
        </Main>
      </AppArea>
      <Taskbar>
        <Widget>
          <WidgetIcon>
            <NflIcon />
            <WidgetBadge>2</WidgetBadge>
          </WidgetIcon>
        </Widget>
        <TaskSlot><SlotInner><WindowsLogo /></SlotInner></TaskSlot>
        <TaskSearch><WinSearchIcon />Search</TaskSearch>
        <TaskSlot><SlotInner><TaskViewIcon /></SlotInner></TaskSlot>
        <TaskSlot><SlotInner><CopilotIcon /></SlotInner></TaskSlot>
        <TaskSlot><SlotInner><EdgeIcon /></SlotInner></TaskSlot>
        <TaskSlot><SlotInner><StoreIcon /></SlotInner></TaskSlot>
        <TaskSlot><SlotInner><ExplorerIcon /></SlotInner></TaskSlot>
        <TaskSlot><SlotInner><WebexIcon /></SlotInner><Indicator /></TaskSlot>
        <TaskSlot>
          <ActiveFrame />
          <SlotInner><ChromeIcon /></SlotInner>
          <ProfileBadge><SmallAvatar /></ProfileBadge>
          <Indicator $active />
        </TaskSlot>
        <TaskSlot><SlotInner><WeChatIcon /></SlotInner><Indicator /></TaskSlot>
        <TaskSlot><SlotInner><VsCodeIcon /></SlotInner><Indicator /></TaskSlot>
        <Tray>
          <TrayIcon $ml={0}><ChevronUp size={56} strokeWidth={1.200} /></TrayIcon>
          <TrayIcon $ml={46}><CloudIcon /></TrayIcon>
          <Lang><span>ENG</span><span>US</span></Lang>
          <TrayIcon $ml={46}><Wifi size={56} strokeWidth={1.800} /></TrayIcon>
          <TrayIcon $ml={21}><VolumeIcon /></TrayIcon>
          <TrayIcon $ml={27}><BatteryIcon /></TrayIcon>
          <Clock><div>12:29 PM</div><div>2025-09-30</div></Clock>
        </Tray>
      </Taskbar>
    </Page>
  );
}
